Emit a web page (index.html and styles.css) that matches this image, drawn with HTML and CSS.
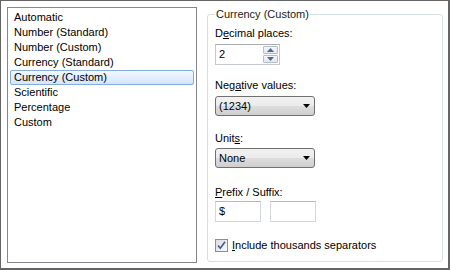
FILE: index.html
```html
<!DOCTYPE html>
<html lang="en">
<head>
  <meta charset="UTF-8">
  <title>Format Number</title>
  <link rel="stylesheet" href="styles.css">
</head>
<body>
  <div class="dialog">
    <ul class="format-list">
      <li>Automatic</li>
      <li>Number (Standard)</li>
      <li>Number (Custom)</li>
      <li>Currency (Standard)</li>
      <li class="selected">Currency (Custom)</li>
      <li>Scientific</li>
      <li>Percentage</li>
      <li>Custom</li>
    </ul>
    <fieldset class="group">
      <legend>Currency (Custom)</legend>

      <div class="label label-decimal">D<u>e</u>cimal places:</div>
      <div class="spin">
        <span class="spin-value">2</span>
        <span class="spin-buttons">
          <span class="spin-btn">
            <svg width="7" height="4" viewBox="0 0 7 4"><path d="M0 4 L3.5 0 L7 4 Z" fill="#4f6a8f"/></svg>
          </span>
          <span class="spin-btn">
            <svg width="7" height="4" viewBox="0 0 7 4"><path d="M0 0 L7 0 L3.5 4 Z" fill="#4f6a8f"/></svg>
          </span>
        </span>
      </div>

      <div class="label label-negative">Neg<u>a</u>tive values:</div>
      <div class="combo combo-negative">
        <span>(1234)</span>
        <svg width="7" height="4" viewBox="0 0 7 4"><path d="M0 0 L7 0 L3.5 4 Z" fill="#000"/></svg>
      </div>

      <div class="label label-units">Unit<u>s</u>:</div>
      <div class="combo combo-units">
        <span>None</span>
        <svg width="7" height="4" viewBox="0 0 7 4"><path d="M0 0 L7 0 L3.5 4 Z" fill="#000"/></svg>
      </div>

      <div class="label label-prefix"><u>P</u>refix / Suffix:</div>
      <div class="affix-row">
        <div class="text-box">$</div>
        <div class="text-box"></div>
      </div>

      <div class="check-row">
        <span class="check-box">
          <svg width="11" height="11" viewBox="0 0 11 11"><path d="M2 5.5 L4.3 8.3 L9 1.8" fill="none" stroke="#3f5c95" stroke-width="1.6"/></svg>
        </span>
        <span><u>I</u>nclude thousands separators</span>
      </div>
    </fieldset>
  </div>
</body>
</html>
```

FILE: styles.css
```css
* { box-sizing: border-box; }
body { margin: 0; font-family: "Liberation Sans", Arial, sans-serif; font-size: 11px; color: #000; background: #fff; }
u { text-decoration: underline; text-underline-offset: 1px; }

.dialog { width: 450px; height: 270px; display: flex; gap: 10px; padding: 6px 5px 5px 6px; border: 1px solid #646464; border-right-width: 2px; border-bottom-width: 2px; background: #fff; }

.format-list { list-style: none; margin: 0; padding: 2px; width: 190px; flex: none; border: 1px solid #828790; }
.format-list li { height: 15px; line-height: 13px; padding: 0 3px; border: 1px solid transparent; border-radius: 2px; white-space: nowrap; }
.format-list li.selected { border-color: #84acdd; background: linear-gradient(#f3f8fe, #d3e5fb); }

.group { margin: 1px 0; padding: 0 6px 0 7px; width: 236px; flex: none; min-width: 0; border: 1px solid #d5dfe5; border-radius: 3px; }
.group legend { padding: 0 1px; margin-left: 0; line-height: 13px; color: #1a1a1a; }

.label { line-height: 13px; }
.label-decimal { margin-top: 6px; }
.label-negative { margin-top: 14px; }
.label-units { margin-top: 16px; }
.label-prefix { margin-top: 18px; }

.spin { margin-top: 4px; width: 65px; height: 21px; display: flex; border: 1px solid #c4c9d0; border-top-color: #abadb3; background: #fff; }
.spin-value { flex: 1; padding-left: 3px; line-height: 19px; }
.spin-buttons { width: 16px; display: flex; flex-direction: column; padding: 1px 1px 1px 0; gap: 1px; }
.spin-btn { flex: 1; display: flex; align-items: center; justify-content: center; border: 1px solid #b7bec8; border-radius: 1px; background: linear-gradient(#f6f7f9, #e3e7ec); }

.combo { width: 100px; height: 20px; display: flex; align-items: center; justify-content: space-between; padding: 0 4px 0 3px; border: 1px solid #707070; border-radius: 3px; background: linear-gradient(#f2f2f2 0%, #ebebeb 50%, #dddddd 50%, #cfcfcf 100%); }
.combo-negative { margin-top: 4px; }
.combo-units { margin-top: 3px; }

.affix-row { margin-top: 2px; display: flex; gap: 9px; }
.text-box { width: 46px; height: 21px; padding-left: 3px; line-height: 19px; border: 1px solid #d3d8de; border-top-color: #b5bac1; background: #fff; }

.check-row { margin-top: 17px; display: flex; align-items: center; gap: 4px; line-height: 13px; }
.check-box { width: 13px; height: 13px; display: flex; align-items: center; justify-content: center; border: 1px solid #8f8f8f; background: linear-gradient(135deg, #dcdcdc, #fafafa); }
```
